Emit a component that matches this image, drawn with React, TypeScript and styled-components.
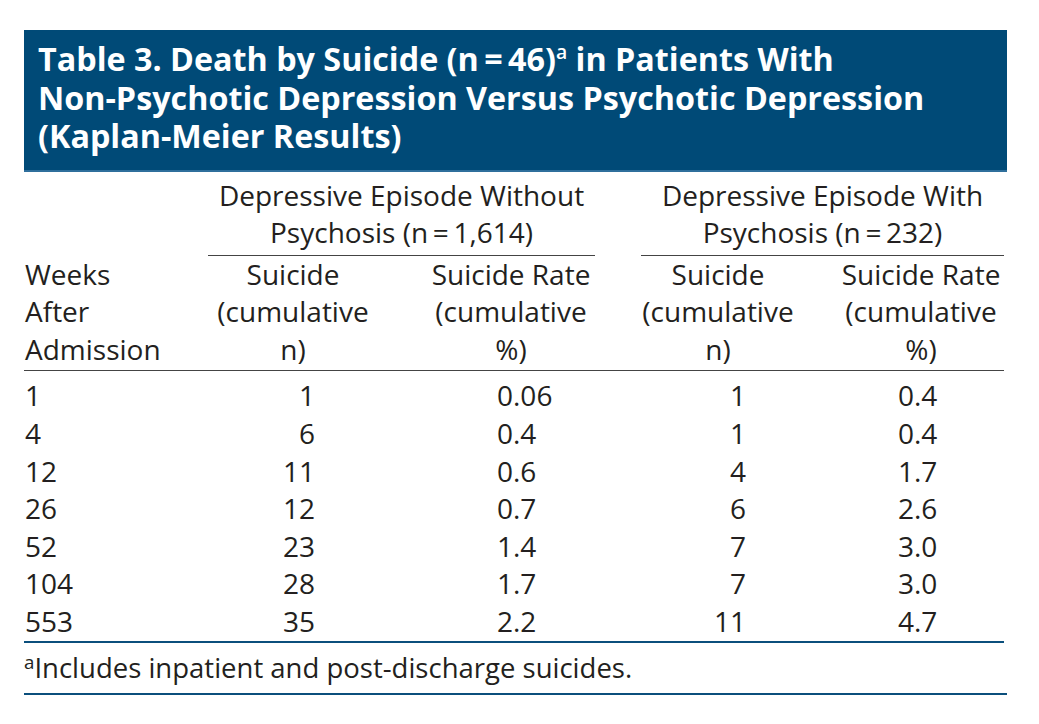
import React from 'react';
import styled, { createGlobalStyle } from 'styled-components';

const GlobalStyle = createGlobalStyle`
    body {
        margin: 0;
        background: #ffffff;
        font-family: "Open Sans", "Liberation Sans", sans-serif;
        color: #231f20;
    }
`;

const Page = styled.div`
    padding: 30px 32px 0 24px;
    width: 983px;
`;

const TitleBar = styled.div`
    background: #004a77;
    border-bottom: 2px solid #2f6f9c;
    color: #ffffff;
    font-weight: 700;
    font-size: 32.3px;
    line-height: 38.5px;
    padding: 9px 14px 15px 14px;
    white-space: nowrap;
`;

const Sup = styled.sup`
    font-size: 0.6em;
    font-weight: 600;
    line-height: 0;
    vertical-align: 0.6em;
`;

const Grid = styled.div`
    display: grid;
    grid-template-columns: 184px 196px 214px 204px 182px;
    width: 980px;
    font-size: 28px;
    line-height: 37.6px;
    white-space: nowrap;
`;

const GroupHead = styled.div<{ $side: 'left' | 'right' }>`
    grid-column: ${p => (p.$side === 'left' ? '2 / 4' : '4 / 6')};
    text-align: center;
    margin: ${p => (p.$side === 'left' ? '0 23px 0 0' : '0 0 0 23px')};
    padding: 5px 0 3px;
    border-bottom: 1.5px solid #444;
`;

const HeadCell = styled.div<{ $align: 'left' | 'center'; $shift?: number }>`
    grid-row: 2;
    text-align: ${p => p.$align};
    padding-left: ${p => Math.max(0, p.$shift ?? 0)}px;
    padding-right: ${p => Math.max(0, -(p.$shift ?? 0))}px;
    padding-top: 0;
    padding-bottom: 2px;
    border-bottom: 1.5px solid #444;
`;

const Cell = styled.div<{ $align: 'left' | 'right'; $pad: number; $first?: boolean }>`
    text-align: ${p => p.$align};
    padding-left: ${p => (p.$align === 'left' ? p.$pad : 0)}px;
    padding-right: ${p => (p.$align === 'right' ? p.$pad : 0)}px;
    padding-top: ${p => (p.$first ? 6 : 0)}px;
    font-variant-numeric: tabular-nums;
`;

const BottomRule = styled.div`
    grid-column: 1 / -1;
    border-top: 2px solid #0b4f7c;
`;

const Footnote = styled.div`
    width: 983px;
    font-size: 27.5px;
    line-height: 36px;
    padding: 7px 0 7px 0;
    border-bottom: 2px solid #0b4f7c;
    white-space: nowrap;
`;

const FootSup = styled.sup`
    font-size: 0.68em;
    line-height: 0;
    vertical-align: 0.5em;
`;

type Row = [string, string, string, string, string];

const rows: Row[] = [
    ['1', '1', '0.06', '1', '0.4'],
    ['4', '6', '0.4', '1', '0.4'],
    ['12', '11', '0.6', '4', '1.7'],
    ['26', '12', '0.7', '6', '2.6'],
    ['52', '23', '1.4', '7', '3.0'],
    ['104', '28', '1.7', '7', '3.0'],
    ['553', '35', '2.2', '11', '4.7'],
];

const cellSpec: { align: 'left' | 'right'; pad: number }[] = [
    { align: 'left', pad: 1 },
    { align: 'right', pad: 89 },
    { align: 'left', pad: 93 },
    { align: 'right', pad: 76 },
    { align: 'left', pad: 76 },
];

const App: React.FC = () => (
    <>
        <GlobalStyle />
        <Page>
            <TitleBar>
                Table 3. Death by Suicide (n{'\u2009'}={'\u2009'}46)<Sup>a</Sup> in Patients With
                <br />
                Non-Psychotic Depression Versus Psychotic Depression
                <br />
                (Kaplan-Meier Results)
            </TitleBar>
            <Grid>
                <GroupHead $side="left">
                    Depressive Episode Without
                    <br />
                    Psychosis (n{'\u2009'}={'\u2009'}1,614)
                </GroupHead>
                <GroupHead $side="right">
                    Depressive Episode With
                    <br />
                    Psychosis (n{'\u2009'}={'\u2009'}232)
                </GroupHead>
                <HeadCell $align="left" $shift={1}>
                    Weeks
                    <br />
                    After
                    <br />
                    Admission
                </HeadCell>
                <HeadCell $align="center" $shift={-26}>
                    Suicide
                    <br />
                    (cumulative
                    <br />
                    n)
                </HeadCell>
                <HeadCell $align="center">
                    Suicide Rate
                    <br />
                    (cumulative
                    <br />
                    %)
                </HeadCell>
                <HeadCell $align="center" $shift={-4}>
                    Suicide
                    <br />
                    (cumulative
                    <br />
                    n)
                </HeadCell>
                <HeadCell $align="center" $shift={16}>
                    Suicide Rate
                    <br />
                    (cumulative
                    <br />
                    %)
                </HeadCell>
                {rows.map((row, r) =>
                    row.map((value, c) => (
                        <Cell
                            key={`${r}-${c}`}
                            $align={cellSpec[c].align}
                            $pad={cellSpec[c].pad}
                            $first={r === 0}
                        >
                            {value}
                        </Cell>
                    ))
                )}
                <BottomRule />
            </Grid>
            <Footnote>
                <FootSup>a</FootSup>Includes inpatient and post-discharge suicides.
            </Footnote>
        </Page>
    </>
);

export default App;
